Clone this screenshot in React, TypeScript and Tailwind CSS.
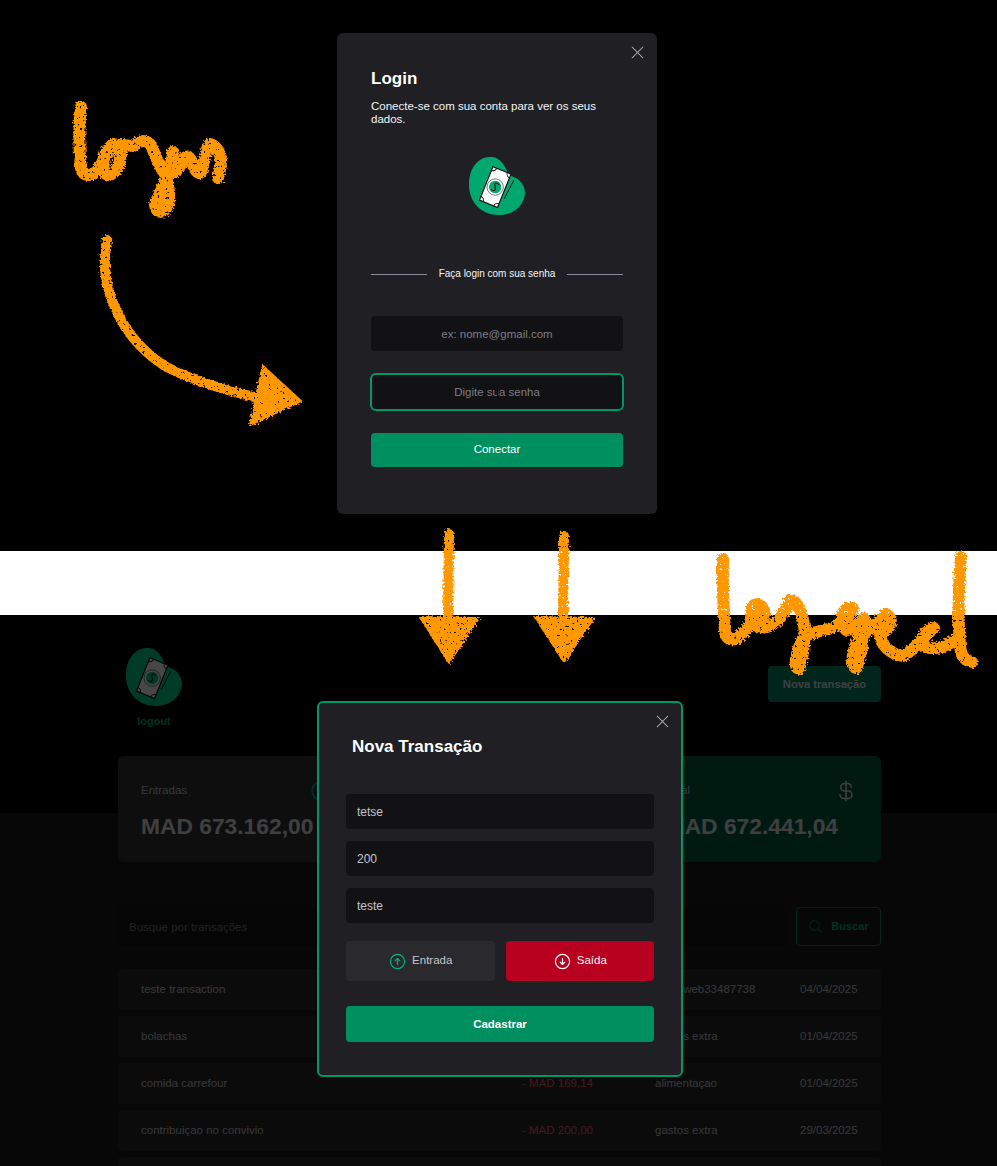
import { PiArrowCircleDown, PiArrowCircleUp, PiCurrencyDollar, PiMagnifyingGlass, PiXLight } from "react-icons/pi";

const transactions = [
  { title: "teste transaction", price: "MAD 721,00", category: "teste web33487738", date: "04/04/2025", out: false },
  { title: "bolachas", price: "- MAD 20,00", category: "gastos extra", date: "01/04/2025", out: true },
  { title: "comida carrefour", price: "- MAD 169,14", category: "alimentaçao", date: "01/04/2025", out: true },
  { title: "contribuiçao no convivio", price: "- MAD 200,00", category: "gastos extra", date: "29/03/2025", out: true },
];

function Logo({ green = "#00a86f" }: { green?: string }) {
  return (
    <svg width="56" height="58" viewBox="0 0 56 58" fill="none">
      <path d="M20 0C30 -1 35 7 39 16C42 20 47 20 50 23C54 27 56 31 56 36C55 50 43 58 30 58C12 58 0 45 0 28C0 12 8 1 20 0Z" fill={green} />
      <path d="M45 23L35 42" stroke="#121214" strokeWidth="1" />
      <g transform="rotate(22 26 30)">
        <rect x="16.5" y="12" width="19.5" height="36" fill="#ffffff" stroke="#121214" strokeWidth="1.2" />
        <circle cx="26.2" cy="30" r="8.2" fill="#ffffff" stroke="#121214" strokeWidth="0.5" />
        <circle cx="26.2" cy="30" r="6.2" fill={green} />
        <path d="M29 26.5C26 24.5 23.5 26.5 25.5 29C27.5 31.5 28 33.5 25.5 34C24.5 34.2 23.5 33.8 23 33.2" stroke="#121214" strokeWidth="1.1" />
        <path d="M16.5 16A4 4 0 0 0 20.5 12M32 12A4 4 0 0 0 36 16M16.5 44A4 4 0 0 1 20.5 48M32 48A4 4 0 0 1 36 44" stroke="#121214" strokeWidth="1" />
      </g>
    </svg>
  );
}

function SummaryCard({ label, value, icon, green }: { label: string; value: string; icon: React.ReactNode; green?: boolean }) {
  return (
    <div className={`h-[106px] rounded-md px-[23px] pt-[23px] ${green ? "bg-[#015f43]" : "bg-[#323238]"}`}>
      <div className="flex items-center justify-between text-[11.5px] text-[#c4c4cc]">
        <span>{label}</span>
        {icon}
      </div>
      <p className="mt-[8px] text-[22.8px] leading-[30px] font-bold whitespace-nowrap text-[#e1e1e6]">{value}</p>
    </div>
  );
}

function Scribbles() {
  return (
    <svg className="pointer-events-none absolute top-0 left-0 z-30" width="997" height="1166" viewBox="0 0 997 1166" fill="none">
      <defs>
        <filter id="crayon" x="0" y="0" width="997" height="1166" filterUnits="userSpaceOnUse" colorInterpolationFilters="sRGB">
          <feTurbulence type="fractalNoise" baseFrequency="0.5" numOctaves="2" seed="4" result="noise" />
          <feDisplacementMap in="SourceGraphic" in2="noise" scale="6" result="rough" />
          <feTurbulence type="fractalNoise" baseFrequency="0.35" numOctaves="2" seed="11" />
          <feColorMatrix values="0 0 0 0 0 0 0 0 0 0 0 0 0 0 0 -14 0 0 0 4.4" result="holes" />
          <feComposite in="rough" in2="holes" operator="out" />
        </filter>
      </defs>
      <g filter="url(#crayon)" stroke="#ff9800" strokeLinecap="round" strokeLinejoin="round">
        {/* login */}
        <path
          strokeWidth="12"
          d="M81 107C79 125 79 150 81 168C83 177 92 177 98 170C102 165 104 158 106 152C112 141 122 142 121 155C120 168 112 178 106 174C101 170 104 158 110 150C118 142 128 146 133 146C142 138 150 140 153 150C157 160 163 172 166 176C170 170 172 162 173 152M166 176C165 186 158 195 155 205C156 214 164 214 168 205C171 196 168 186 166 176C172 172 178 172 180 166C184 156 188 154 191 160C194 168 198 176 201 172C204 164 206 146 210 144C216 146 220 152 221 160C221 168 219 174 218 178"
        />
        {/* arrow to the form */}
        <path strokeWidth="10" d="M107 240C103 262 105 285 114 305C124 330 140 350 165 366C190 380 225 390 258 398" />
        <path d="M263 366L301 401L250 425L256 396Z" fill="#ff9800" stroke="#ff9800" strokeWidth="2" />
        {/* arrows down */}
        <path strokeWidth="10" d="M449 534L448 618" />
        <path d="M420 617L479 618L449 663Z" fill="#ff9800" stroke="#ff9800" strokeWidth="2" />
        <path strokeWidth="10" d="M564 536L563 618" />
        <path d="M535 617L594 618L564 662Z" fill="#ff9800" stroke="#ff9800" strokeWidth="2" />
        {/* logged */}
        <path
          strokeWidth="12"
          d="M723 559C722 585 724 615 725 632C727 642 736 641 742 634C750 628 752 618 752 608C755 600 766 606 764 614C762 624 755 628 760 627C770 630 784 618 790 600C797 600 802 612 804 625C806 640 802 660 799 669C794 668 794 655 804 637C815 630 825 632 836 626C848 618 856 608 852 608C842 606 838 622 846 630C854 630 860 622 864 618C866 635 860 660 856 668C850 666 852 650 860 636C870 630 880 620 886 614C894 618 892 630 880 633C880 645 890 654 903 656C915 650 925 635 934 628C926 630 918 640 924 646C935 652 950 645 960 636M961 557C958 590 958 620 960 645C961 655 963 660 972 662"
        />
      </g>
    </svg>
  );
}

export default function App() {
  return (
    <div className="relative h-[1166px] w-full overflow-hidden bg-black font-['Liberation_Sans',Arial,sans-serif]">
      {/* Login screen */}
      <section className="h-[551px] bg-black pt-[33px]">
        <div className="relative ml-[337px] h-[481px] w-[320px] rounded-md bg-[#202024] px-[34px] pt-[36px] text-white">
          <PiXLight className="absolute top-[10px] right-[10px] text-[19px] text-[#a8a8b3]" />
          <h2 className="text-[17px] leading-[20px] font-bold">Login</h2>
          <p className="mt-[11px] text-[11.5px] leading-[13px] text-[#f4f4f5]">Conecte-se com sua conta para ver os seus dados.</p>

          <div className="mt-[31px] flex justify-center">
            <Logo />
          </div>

          <div className="mt-[52px] flex items-center justify-between">
            <span className="h-px w-[56px] bg-[#8d8d99]" />
            <span className="text-[10px] leading-[14px] text-[#f4f4f5]">Faça login com sua senha</span>
            <span className="h-px w-[56px] bg-[#8d8d99]" />
          </div>

          <input
            readOnly
            placeholder="ex: nome@gmail.com"
            className="mt-[35px] block h-[35px] w-full rounded bg-[#121214] text-center text-[11.5px] outline-none placeholder:text-[#7c7c8a]"
          />
          <div className="relative mt-[22px] -mx-px">
            <input
              readOnly
              placeholder="Digite sua senha"
              className="block h-[38px] w-full rounded-md border-2 border-[#00966a] bg-[#121214] text-center text-[11.5px] outline-none placeholder:text-[#7c7c8a]"
            />
            <span className="absolute top-[13px] left-[127px] h-[12px] w-px bg-[#0a0a0a]" />
          </div>
          <button className="mt-[22px] block h-[34px] w-full rounded bg-[#008f5f] text-[11.5px] text-white">Conectar</button>
        </div>
      </section>

      <div className="h-[64px] bg-white" />

      {/* Logged in dashboard with the new transaction modal open */}
      <section className="relative h-[551px] bg-[#1a1a1e]">
        <div className="h-[198px] bg-black" />
        <div className="absolute top-0 left-[118px] w-[763px]">
          <header className="flex items-start justify-between pt-[33px]">
            <div className="ml-[8px] flex w-[56px] flex-col items-center">
              <Logo green="#00d48c" />
              <span className="mt-[8px] text-[11px] leading-[14px] font-bold text-[#00b37e]">logout</span>
            </div>
            <button className="mt-[18px] h-[36px] w-[113px] rounded bg-[#00875f] text-[11.2px] font-bold text-[#e1e1e6]">Nova transação</button>
          </header>

          <div className="mt-[28px] grid grid-cols-3 gap-[24px]">
            <SummaryCard label="Entradas" value="MAD 673.162,00" icon={<PiArrowCircleUp className="text-[24px] text-[#00b37e]" />} />
            <SummaryCard label="Saídas" value="MAD 720,96" icon={<PiArrowCircleDown className="text-[24px] text-[#f75a68]" />} />
            <SummaryCard label="Total" value="MAD 672.441,04" icon={<PiCurrencyDollar className="text-[24px] text-[#e1e1e6]" />} green />
          </div>

          <div className="mt-[45px] flex gap-[11px]">
            <input readOnly placeholder="Busque por transações" className="h-[39px] flex-1 rounded bg-[#121214] px-[11px] text-[11.5px] outline-none placeholder:text-[#7c7c8a]" />
            <button className="flex h-[39px] w-[85px] items-center justify-center gap-[8px] rounded border border-[#00875f] text-[11px] font-bold text-[#00b37e]">
              <PiMagnifyingGlass className="text-[15px] text-[#00875f]" />
              Buscar
            </button>
          </div>

          <div className="mt-[23px] flex flex-col gap-[6px]">
            {transactions.map((t) => (
              <div key={t.title} className="grid h-[41px] grid-cols-[381px_133px_145px_1fr] items-center rounded bg-[#29292e] px-[23px] text-[11.5px] text-[#c4c4cc]">
                <span>{t.title}</span>
                <span className={t.out ? "text-[#f75a68]" : "text-[#00b37e]"}>{t.price}</span>
                <span>{t.category}</span>
                <span>{t.date}</span>
              </div>
            ))}
            <div className="h-[41px] rounded bg-[#29292e]" />
          </div>
        </div>

        <div className="absolute inset-0 bg-black/[0.72]" />

        <div className="absolute top-[86px] left-[317px] h-[376px] w-[366px] rounded-md border-2 border-[#00966a] bg-[#202024] px-[27px] pt-[34px]">
          <PiXLight className="absolute top-[9px] right-[9px] text-[19px] text-[#a8a8b3]" />
          <h2 className="ml-[6px] text-[17px] leading-[20px] font-bold text-white">Nova Transação</h2>
          <div className="mt-[37px] flex flex-col gap-[12px]">
            {["tetse", "200", "teste"].map((value) => (
              <input key={value} readOnly value={value} className="h-[35px] rounded bg-[#121214] px-[11px] text-[12px] text-[#c4c4cc] outline-none" />
            ))}
          </div>
          <div className="mt-[18px] grid grid-cols-2 gap-[11px]">
            <button className="flex h-[40px] items-center justify-center gap-[5px] rounded bg-[#29292e] text-[11.5px] text-[#c4c4cc]">
              <PiArrowCircleUp className="text-[19px] text-[#00b37e]" />
              Entrada
            </button>
            <button className="flex h-[40px] items-center justify-center gap-[5px] rounded bg-[#b8001f] text-[11.5px] text-[#f4f4f5]">
              <PiArrowCircleDown className="text-[19px] text-white" />
              Saída
            </button>
          </div>
          <button className="mt-[25px] h-[36px] w-full rounded bg-[#008f5f] pt-px text-[11.5px] font-bold text-white">Cadastrar</button>
        </div>
      </section>

      <Scribbles />
    </div>
  );
}
